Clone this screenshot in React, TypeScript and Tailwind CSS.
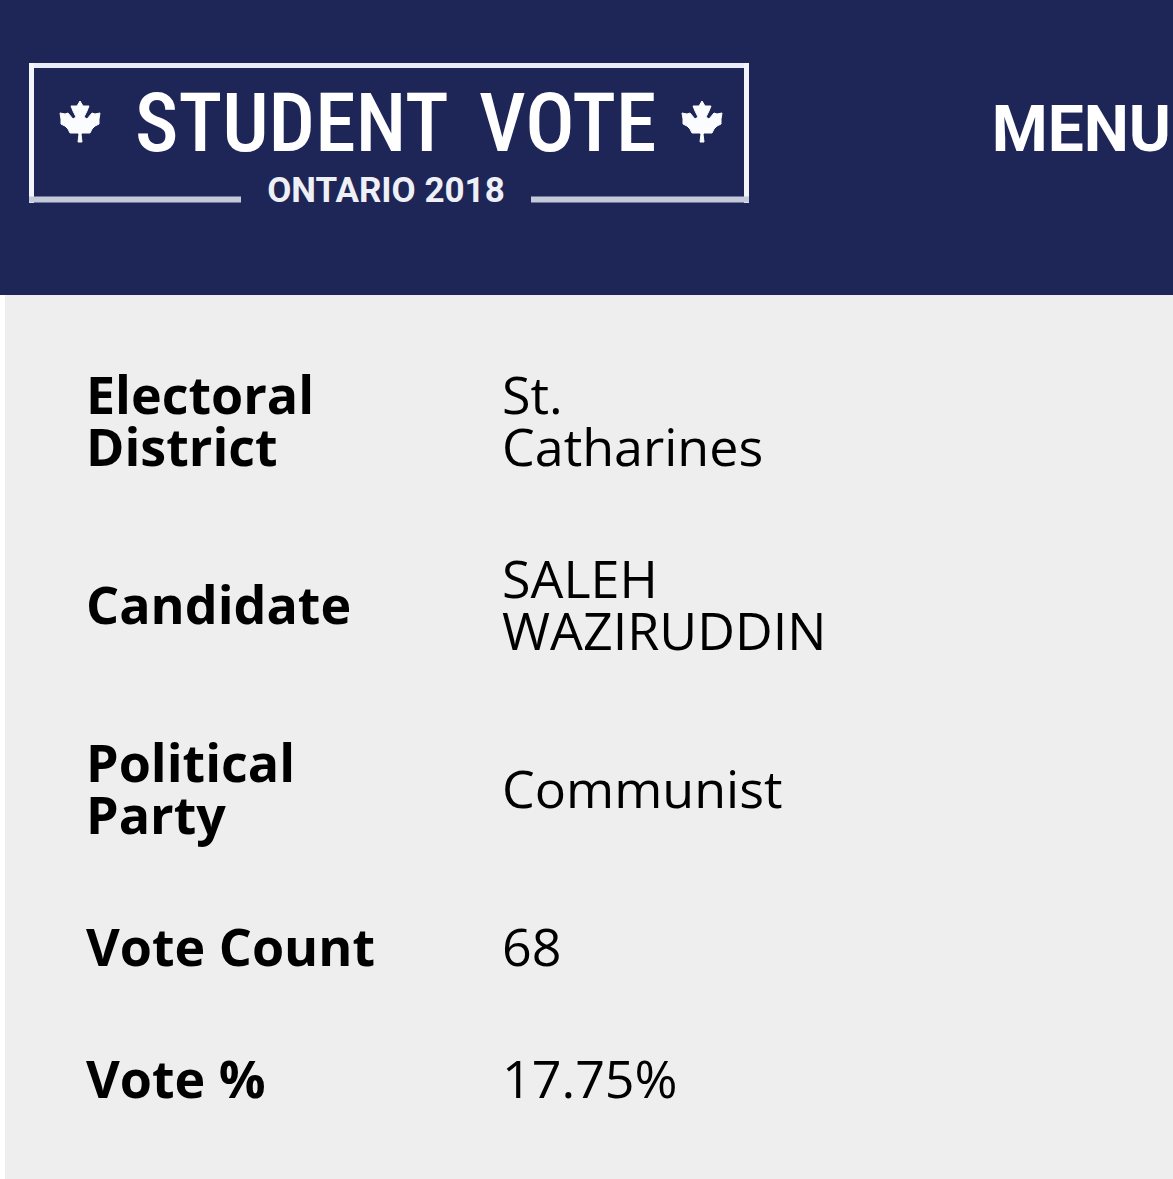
const rows = [
  { label: "Electoral District", value: "St. Catharines" },
  { label: "Candidate", value: "SALEH WAZIRUDDIN" },
  { label: "Political Party", value: "Communist" },
  { label: "Vote Count", value: "68" },
  { label: "Vote %", value: "17.75%" },
];

function Leaf({ x, y }: { x: number; y: number }) {
  return (
    <svg x={x} y={y} width="42" height="44" viewBox="0 0 42 44">
      <path
        fill="#fbfcff"
        stroke="#fbfcff"
        strokeLinejoin="round"
        d="M21 1 L24 6 L30 6 L28 11 L25 17 L28 19 L33 13 L36 14 L41 13 L40 19 L40 24 L36 26 L33 29 L31 33 L23 33 L22 34 L23 42 H19 L20 34 L19 33 L11 33 L9 29 L6 26 L2 24 L2 19 L1 13 L6 14 L9 13 L14 19 L17 17 L14 11 L12 6 L18 6 Z"
      />
    </svg>
  );
}

function Logo() {
  return (
    <svg viewBox="0 0 720 140" className="block w-full overflow-visible" aria-label="Student Vote Ontario 2018">
      <path d="M0 2.5 H720" stroke="#e9edf5" strokeWidth="5" />
      <path d="M2.5 0 V140 M717.5 0 V140" stroke="#f3f5fa" strokeWidth="5" />
      <path d="M0 136.5 H212 M502 136.5 H720" stroke="#c5cadb" strokeWidth="6" />
      <Leaf x={30} y={37} />
      <Leaf x={652} y={37} />
      <g fill="white" className="font-['Roboto_Condensed','Liberation_Sans_Narrow',sans-serif] text-[82px] font-medium">
        <text x="106" y="88">
          STUDENT
        </text>
        <text x="450" y="88">
          VOTE
        </text>
      </g>
      <text
        x="357"
        y="139"
        textAnchor="middle"
        fill="#eef0f6"
        className="font-[Roboto,sans-serif] text-[35px] font-bold"
      >
        ONTARIO 2018
      </text>
    </svg>
  );
}

export default function App() {
  return (
    <div className="min-h-screen bg-white font-['Open_Sans',sans-serif] text-black">
      <header className="flex items-start justify-between bg-[#1e2657] pt-[63px] pr-[2px] pb-[92px] pl-[29px]">
        <a href="#" className="w-full max-w-[720px]">
          <Logo />
        </a>
        <button
          type="button"
          className="mt-8 shrink-0 font-[Roboto,sans-serif] text-[64px] leading-[70px] font-bold text-white"
        >
          MENU
        </button>
      </header>

      <main className="ml-[5px] min-h-[calc(100vh-295px)] bg-[#eeeeee] py-[33px] pl-[41px]">
        <table className="text-left text-[52px] leading-[52px]">
          <tbody>
            {rows.map((row) => (
              <tr key={row.label}>
                <th scope="row" className="w-[416px] px-10 py-10 font-bold">
                  {row.label}
                </th>
                <td className="w-[408px] max-w-[408px] px-10 py-10">{row.value}</td>
              </tr>
            ))}
          </tbody>
        </table>
      </main>
    </div>
  );
}
